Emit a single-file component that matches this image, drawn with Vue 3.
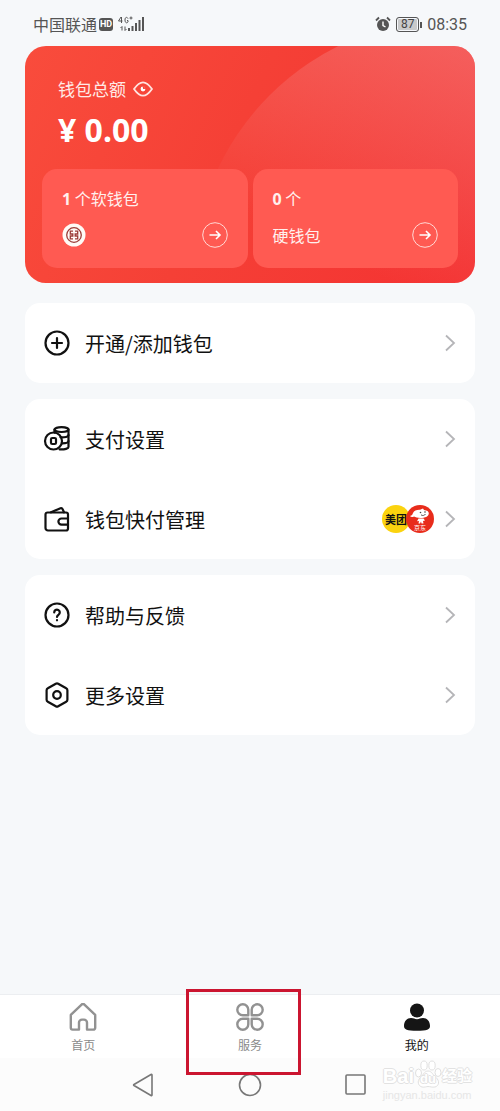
<script setup>
import { ref } from 'vue'

/** 菜单分组：图标均为 28x28 的线条路径 */
const groups = [
  [
    {
      label: '开通/添加钱包',
      paths: ['M14 2.500a11.500 11.500 0 1 0 0 23a11.500 11.500 0 1 0 0-23z', 'M14 9v10M9 14h10'],
    },
  ],
  [
    {
      label: '支付设置',
      paths: [
        'M10.500 7.500a8.500 8.500 0 1 0 0 17a8.500 8.500 0 1 0 0-17z',
        'M9.300 13h2.400a1.300 1.300 0 0 1 1.300 1.300v3.400a1.300 1.300 0 0 1-1.300 1.300h-2.400a1.300 1.300 0 0 1-1.300-1.300v-3.400a1.300 1.300 0 0 1 1.300-1.300z',
        'M11.500 4.600c0-1.400 3-2.400 7-2.400s7 1 7 2.400s-3 2.400-7 2.400s-7-1-7-2.400z',
        'M11.500 4.600v3M25.500 4.600V22c0 1.500-3.400 2.600-9 2.400',
        'M17.500 12.400c4 .2 8-.5 8-2.300M19 18.300c4 0 6.500-.7 6.500-2.300',
      ],
    },
    {
      label: '钱包快付管理',
      badges: true,
      paths: [
        'M4.500 7.500h18.500a2 2 0 0 1 2 2v14a2 2 0 0 1-2 2h-18a2.500 2.500 0 0 1-2.500-2.500v-13.500a2 2 0 0 1 2-2z',
        'M8 7.300l9.500-4.100a1.500 1.500 0 0 1 2 .8l1.500 3.300',
        'M25 13.500h-6.500a3 3 0 0 0 0 6.200h6.500',
      ],
    },
  ],
  [
    {
      label: '帮助与反馈',
      paths: [
        'M14 2.500a11.500 11.500 0 1 0 0 23a11.500 11.500 0 1 0 0-23z',
        'M11.200 11.500a2.800 2.800 0 1 1 4.400 2.200c-1.100.7-1.600 1.200-1.600 2.300M14 19v.3',
      ],
    },
    {
      label: '更多设置',
      paths: [
        'M12.800 2.700a2.400 2.400 0 0 1 2.400 0l8 4.600a2.200 2.200 0 0 1 1.200 2v9.400a2.200 2.200 0 0 1-1.200 2l-8 4.600a2.400 2.400 0 0 1-2.400 0l-8-4.600a2.200 2.200 0 0 1-1.200-2v-9.400a2.200 2.200 0 0 1 1.200-2z',
        'M14 10.200a3.800 3.800 0 1 0 0 7.600a3.800 3.800 0 1 0 0-7.600z',
      ],
    },
  ],
]

const tabs = [
  { key: 'home', label: '首页' },
  { key: 'service', label: '服务' },
  { key: 'mine', label: '我的' },
]
const active = ref('mine')
</script>

<template>
  <div class="page">
    <header class="status">
      <span class="status__carrier">中国联通</span>
      <span class="status__hd">HD</span>
      <svg class="status__signal" width="28" height="18" viewBox="0 0 28 18" aria-hidden="true">
        <path d="M4 2L1.500 6h4M4.500 2v6M11 3.500c-1-1.800-3-1.500-3 1.500s2 3.500 3 2V5.500h-1M12.500 3h3M14 1.500v3" />
        <path d="M5 15.500v-4l-1.500 1.500M8 11.500v4l1.500-1.500" />
        <path class="status__bars" d="M12 16v-3M15.500 16v-5M19 16v-8M22.500 16v-11M26 16v-14" />
      </svg>
      <span class="status__space" />
      <svg width="16" height="16" viewBox="0 0 16 16" aria-hidden="true">
        <circle cx="8" cy="9" r="6" fill="#555" />
        <path d="M1 4.500l3-3M15 4.500l-3-3" stroke="#555" stroke-width="1.800" />
        <path d="M8 5.500v4l2.500 1.500" fill="none" stroke="#fff" stroke-width="1.400" />
      </svg>
      <span class="status__battery">87</span>
      <span class="status__time">08:35</span>
    </header>

    <main class="main">
      <section class="card">
        <div class="card__head">
          <div class="card__title">
            <span>钱包总额</span>
            <button type="button" class="card__eye" aria-label="隐藏金额">
              <svg width="20" height="16" viewBox="0 0 20 16">
                <path d="M1 8C4.500 3 7 1.300 10 1.300S15.500 3 19 8c-3.500 5-6 6.700-9 6.700S4.500 13 1 8z" fill="none" stroke="#ffe3df" stroke-width="1.800" stroke-linejoin="round" />
                <circle cx="10" cy="8" r="2.400" fill="#fff" />
                <path d="M9.500 4.500l4 3.200-3.400.2z" fill="#f64237" />
              </svg>
            </button>
          </div>
          <p class="card__amount">¥ 0.00</p>
        </div>
        <div class="card__tiles">
          <button type="button" class="tile">
            <span class="tile__line"><b>1</b> 个软钱包</span>
            <span class="tile__foot">
              <svg width="24" height="24" viewBox="0 0 24 24" aria-hidden="true">
                <circle cx="12" cy="12" r="11.500" fill="#fffaf6" />
                <g fill="none" stroke="#9c3d39" stroke-width="1.300">
                  <circle cx="12" cy="12" r="7.300" />
                  <path d="M11 8.200H8.300v2.800h2.500v2H8.300v2.800H11M13 8.200h2.700v2.800h-2.500v2h2.500v2.800H13" />
                </g>
              </svg>
              <svg class="tile__go" width="26" height="26" viewBox="0 0 26 26" aria-hidden="true">
                <circle cx="13" cy="13" r="12.300" />
                <path d="M7.500 13h10.500M14 9l4 4-4 4" />
              </svg>
            </span>
          </button>
          <button type="button" class="tile">
            <span class="tile__line"><b>0</b> 个</span>
            <span class="tile__foot">
              <span>硬钱包</span>
              <svg class="tile__go" width="26" height="26" viewBox="0 0 26 26" aria-hidden="true">
                <circle cx="13" cy="13" r="12.300" />
                <path d="M7.500 13h10.500M14 9l4 4-4 4" />
              </svg>
            </span>
          </button>
        </div>
      </section>

      <section v-for="(items, i) in groups" :key="i" class="group">
        <button v-for="item in items" :key="item.label" type="button" class="row">
          <svg class="row__icon" width="28" height="28" viewBox="0 0 28 28" aria-hidden="true">
            <path v-for="d in item.paths" :key="d" :d="d" />
          </svg>
          <span class="row__label">{{ item.label }}</span>
          <span v-if="item.badges" class="row__badges">
            <span class="badge badge--meituan">美团</span>
            <span class="badge badge--jd">
              <svg width="22" height="16" viewBox="0 0 22 16" aria-hidden="true">
                <path d="M1 8c2-.5 2.500-1.500 3-3c1-2.500 4-3.500 7-3.300L14 .5l1 1.500c3 .3 5 1.500 4.800 3.500c-.2 3-3.800 4.500-8.300 4.500c-3 0-5-1-6.500-1.500c-1.500.8-3 .8-4-.5z" fill="#fff" />
                <path d="M9.500 10.500h5l1.500 2-2 .5.500 2.500h-2l-.5-2-1 2H9.500l.5-2.500-2 .3z" fill="#fff" />
                <path d="M12 6.800c1.500 1.200 3.500.8 4.500-.8" fill="none" stroke="#555" />
                <circle cx="11.500" cy="4.500" r=".8" fill="#444" />
                <circle cx="16" cy="4" r=".8" fill="#444" />
              </svg>
              <span>京东</span>
            </span>
          </span>
          <svg class="row__arrow" width="12" height="18" viewBox="0 0 12 18" aria-hidden="true">
            <path d="M2 1.500l8 7.500-8 7.500" />
          </svg>
        </button>
      </section>
    </main>

    <nav class="tabs">
      <button
        v-for="tab in tabs"
        :key="tab.key"
        type="button"
        class="tab"
        :class="{ 'tab--active': active === tab.key }"
        @click="active = tab.key"
      >
        <svg v-if="tab.key === 'home'" class="tab__icon" width="28" height="28" viewBox="0 0 28 28" aria-hidden="true">
          <path d="M1.800 11.800L12.600 1.600a2 2 0 0 1 2.800 0L26.200 11.800v13a1.800 1.800 0 0 1-1.800 1.800H18v-7a3 3 0 0 0-3-3h-2a3 3 0 0 0-3 3v7H3.600A1.800 1.800 0 0 1 1.800 24.800z" />
        </svg>
        <svg v-else-if="tab.key === 'service'" class="tab__icon" width="28" height="28" viewBox="0 0 28 28" aria-hidden="true">
          <path d="M12.300 12.300H6.800a5.500 5.500 0 1 1 5.500-5.500z" />
          <path d="M15.700 12.300V6.800a5.500 5.500 0 1 1 5.500 5.500z" />
          <path d="M12.300 15.700v5.500a5.500 5.500 0 1 1-5.500-5.500z" />
          <path d="M15.700 15.700h5.500a5.500 5.500 0 1 1-5.500 5.500z" />
        </svg>
        <svg v-else width="28" height="28" viewBox="0 0 28 28" aria-hidden="true">
          <circle cx="14" cy="7.500" r="7" fill="#151515" />
          <path d="M8 15c3 0 3.500 1.200 6 1.200s3-1.200 6-1.200c4 0 7 3 7 8c0 3.500-3 4.700-13 4.700S1 26.500 1 23c0-5 3-8 7-8z" fill="#151515" />
        </svg>
        <span>{{ tab.label }}</span>
        <span v-if="tab.key === 'service'" class="tab__mark" />
      </button>
    </nav>

    <footer class="sys">
      <button type="button" aria-label="返回">
        <svg width="24" height="24" viewBox="0 0 24 24"><path d="M20 2v20q0 1-1 .5L2 12.500q-.8-.5 0-1L19 1.500q1-.5 1 .5z" /></svg>
      </button>
      <button type="button" aria-label="主屏幕">
        <svg width="24" height="24" viewBox="0 0 24 24"><circle cx="12" cy="12" r="10.500" /></svg>
      </button>
      <button type="button" aria-label="最近任务">
        <svg width="24" height="24" viewBox="0 0 24 24"><rect x="2" y="2" width="19" height="19" rx="1" /></svg>
      </button>
      <div class="water">
        <div class="water__logo">
          <span>Bai</span>
          <span class="water__paw">
            <svg width="28" height="28" viewBox="0 0 28 28" aria-hidden="true">
              <ellipse cx="4.500" cy="13" rx="3" ry="4" />
              <ellipse cx="10" cy="5.500" rx="3.200" ry="4.500" />
              <ellipse cx="18" cy="5.500" rx="3.200" ry="4.500" />
              <ellipse cx="24" cy="12.500" rx="3" ry="4" />
              <path d="M14 11c-4 0-5 5-8 7c-3 3-2 8 2 9c3 .5 4-.5 6-.5s4 1 7 .5c4-1 5-6 1-9.500c-3-2-4-6.500-8-6.500z" />
            </svg>
            <span class="water__du">du</span>
          </span>
          <span class="water__cn">经验</span>
        </div>
        <div class="water__url">jingyan.baidu.com</div>
      </div>
    </footer>
  </div>
</template>

<style>
body {
  margin: 0;
  background: #f6f8fb;
}
</style>

<style scoped>
.page {
  display: flex;
  flex-direction: column;
  min-height: 100vh;
  background: #f6f8fa;
  color: #111;
  font-family: 'Noto Sans CJK SC', sans-serif;
}

button {
  padding: 0;
  border: 0;
  background: none;
  color: inherit;
  font: inherit;
  text-align: left;
  cursor: pointer;
}

svg {
  display: block;
  flex: none;
}

.status {
  display: flex;
  align-items: center;
  box-sizing: border-box;
  height: 46px;
  padding: 2px 33px 0;
  color: #555;
  font-size: 16px;
}

.status__hd {
  margin: 0 4px 0 2px;
  padding: 0 1px;
  border-radius: 3px;
  background: #555;
  color: #fff;
  font: bold 9px/13px Roboto, sans-serif;
}

.status__signal path {
  fill: none;
  stroke: #555;
  stroke-width: 1;
}

.status__signal .status__bars {
  stroke-width: 2;
}

.status__space {
  flex: 1;
}

.status__battery {
  position: relative;
  width: 21px;
  margin: 0 8px 0 5px;
  border: 1px solid #555;
  border-radius: 3px;
  background: #c9cacb;
  box-shadow: inset 0 0 0 1px #f6f8fb;
  color: #444;
  font: 12px/13px Roboto, sans-serif;
  text-align: center;
}

.status__battery::after {
  content: '';
  position: absolute;
  top: 4px;
  right: -4px;
  width: 2px;
  height: 6px;
  background: #555;
}

.status__time {
  font-family: Roboto, sans-serif;
}

.main {
  display: flex;
  flex: 1;
  flex-direction: column;
  gap: 16px;
  padding: 0 25px 20px;
}

.card {
  position: relative;
  margin-bottom: 4px;
  padding: 30px 17px 15px;
  overflow: hidden;
  border-radius: 21px;
  background: linear-gradient(115deg, #f94c3c 0%, #f54036 45%, #f43232 100%);
  color: #fff;
}

.card::before {
  content: '';
  position: absolute;
  top: -27px;
  right: -240px;
  width: 522px;
  height: 522px;
  border-radius: 50%;
  background: linear-gradient(205deg, rgba(245, 130, 130, 0.5) 20%, rgba(245, 130, 130, 0) 54%);
}

.card__head {
  position: relative;
  padding: 0 16px;
}

.card__title {
  display: flex;
  align-items: center;
  gap: 7px;
  color: #ffe9e6;
  font-size: 17px;
  line-height: 26px;
}

.card__amount {
  margin: 8px 0 20px;
  font: bold 32px/39px 'Noto Sans', sans-serif;
}

.card__tiles {
  position: relative;
  display: grid;
  grid-template-columns: 1fr 1fr;
  gap: 5px;
}

.tile {
  display: flex;
  flex-direction: column;
  gap: 10px;
  padding: 17px 20px 20px;
  border-radius: 15px;
  background: #ff5a52;
  color: #fff0ee;
  font-size: 16px;
  line-height: 24px;
}

.tile__line b {
  font-family: 'Noto Sans', sans-serif;
}

.tile__foot {
  display: flex;
  align-items: center;
  justify-content: space-between;
  align-self: stretch;
  height: 27px;
}

.tile__go {
  fill: none;
  stroke: #ffd9d5;
  stroke-width: 1;
}

.tile__go path {
  stroke: #fff;
  stroke-width: 1.6;
}

.group {
  border-radius: 15px;
  background: #fff;
}

.row {
  display: flex;
  align-items: center;
  box-sizing: border-box;
  width: 100%;
  height: 80px;
  padding: 0 19px 0 18px;
  font-size: 20px;
}

.row__icon {
  fill: none;
  stroke: #111;
  stroke-width: 2.2;
  stroke-linecap: round;
  stroke-linejoin: round;
}

.row__label {
  flex: 1;
  padding-left: 14px;
}

.row__badges {
  display: flex;
  margin-right: 10px;
}

.badge {
  box-sizing: border-box;
  width: 28px;
  height: 28px;
  border-radius: 50%;
  white-space: nowrap;
}

.badge--meituan {
  padding-left: 3px;
  background: #fbd30f;
  font-size: 11px;
  font-weight: bold;
  line-height: 28px;
}

.badge--jd {
  display: flex;
  flex-direction: column;
  align-items: center;
  margin-left: -4px;
  padding-top: 3px;
  background: #e82c1b;
  color: #fff;
  font-size: 6px;
  line-height: 7px;
}

.row__arrow {
  fill: none;
  stroke: #b5b5b8;
  stroke-width: 1.8;
}

.tabs {
  display: grid;
  grid-template-columns: repeat(3, 1fr);
  height: 63px;
  border-top: 1px solid #eceef1;
  background: #fff;
}

.tab {
  position: relative;
  display: flex;
  flex-direction: column;
  align-items: center;
  gap: 5px;
  padding-top: 8px;
  color: #8a8a8a;
  font-size: 12px;
  line-height: 18px;
}

.tab--active {
  color: #111;
}

.tab__icon {
  fill: none;
  stroke: #929292;
  stroke-width: 2.4;
  stroke-linejoin: round;
}

.tab__mark {
  position: absolute;
  z-index: 1;
  top: -6px;
  left: 19px;
  box-sizing: border-box;
  width: 115px;
  height: 86px;
  border: 3px solid #cb1530;
}

.sys {
  position: relative;
  display: flex;
  align-items: center;
  justify-content: center;
  gap: 82px;
  height: 53px;
  background: #fcfcfc;
}

.sys button svg {
  fill: none;
  stroke: #777;
  stroke-width: 1.6;
}

.water {
  position: absolute;
  right: 28px;
  bottom: 9px;
  color: #fff;
  font-family: 'Liberation Sans', 'Noto Sans CJK SC', sans-serif;
  text-shadow: 1px 0 #e2e2e2, -1px 0 #e2e2e2, 0 1px #e2e2e2, 0 -1px #e2e2e2;
}

.water__logo {
  display: flex;
  align-items: flex-end;
  font-size: 20px;
  font-weight: bold;
  line-height: 24px;
}

.water__paw {
  position: relative;
}

.water__paw svg {
  fill: #fff;
  stroke: #e0e0e0;
}

.water__du {
  position: absolute;
  top: 12px;
  left: 6px;
  font-size: 13px;
  line-height: 14px;
}

.water__cn {
  font-size: 15px;
}

.water__url {
  color: #e6e6e6;
  font-size: 11px;
  line-height: 14px;
  text-shadow: none;
}
</style>
